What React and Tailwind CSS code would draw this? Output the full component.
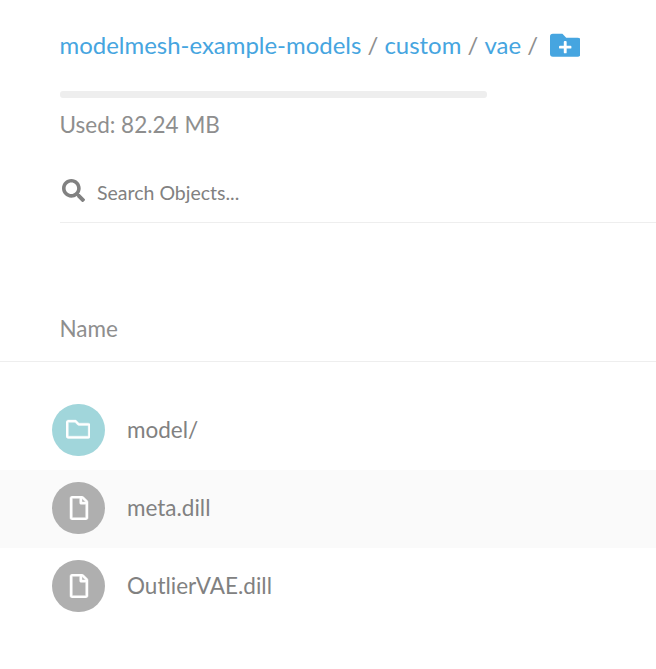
import React from "react";
import { FaSearch, FaFolderPlus, FaRegFolder, FaRegFile } from "react-icons/fa";

const rows = [
  { name: "model/", folder: true },
  { name: "meta.dill" },
  { name: "OutlierVAE.dill" },
];

function Row({ name, folder, striped }) {
  return (
    <div className={`flex h-[78px] items-center pb-0.5 pl-[52px] ${striped ? "bg-[#fafafa]" : "bg-white"}`}>
      <div className={`flex h-[52px] w-[53px] items-center justify-center rounded-full text-white ${folder ? "bg-[#a1d6db]" : "bg-[#afafaf]"}`}>
        {folder ? (
          <FaRegFolder className="mr-px mb-px" size={24.5} stroke="currentColor" strokeWidth={8} />
        ) : (
          <FaRegFile size={24} stroke="currentColor" strokeWidth={10} />
        )}
      </div>
      <span className="ml-[22px] text-[22.5px] leading-7 text-[#818181]">{name}</span>
    </div>
  );
}

export default function App() {
  return (
    <main className="h-[669px] w-[656px] overflow-hidden bg-white font-['Lato',sans-serif] text-[#8e8e8e]">
      <nav className="flex h-[91px] items-center whitespace-pre pb-0.5 pl-[59.5px] text-[23.95px] text-[#46a5e0]">
        <a>modelmesh-example-models</a>
        <span className="text-[#8e8e8e]"> / </span>
        <a>custom</a>
        <span className="text-[#8e8e8e]"> / </span>
        <a>vae</a>
        <span className="text-[#8e8e8e]"> /</span>
        <FaFolderPlus className="ml-3 mt-px" size={30.5} />
      </nav>
      <div className="ml-[60px] h-[7px] w-[427px] rounded-[3px] bg-[#eeeeee]" />
      <div className="ml-[59.5px] mt-[13px] text-[22.5px] leading-7">Used: 82.24 MB</div>
      <div className="ml-[60px] mt-[24px] flex h-[60px] items-center border-b border-[#eeeeee] pl-[2px]">
        <FaSearch className="-mt-[5px] text-[#818181]" size={23} />
        <span className="ml-3 text-[19.5px] text-[#818181]">Search Objects...</span>
      </div>
      <div className="ml-[59.5px] mt-[92px] text-[22.5px] leading-7">Name</div>
      <div className="mt-[18px] h-px bg-[#eeeeee]" />
      <div className="mt-[30px]">
        {rows.map((row, i) => <Row key={row.name} {...row} striped={i === 1} />)}
      </div>
    </main>
  );
}
